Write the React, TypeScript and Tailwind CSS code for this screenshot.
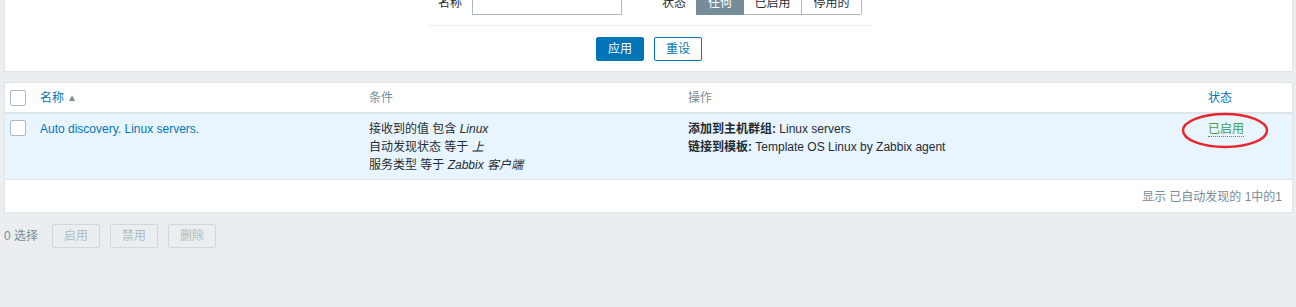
const font = { fontFamily: '"Liberation Sans", Arial, "Noto Sans CJK SC", sans-serif' };

function Checkbox() {
  return <span className="block h-[16px] w-[16px] rounded-[2px] border border-[#acbbc2] bg-white" />;
}

function FilterPanel() {
  return (
    <div className="-mt-[10px] ml-[4px] mr-[3px] border border-[#dfe4e7] bg-white pb-[10px]">
      <div className="ml-[423px] w-[444px]">
        <div className="flex h-[24px] items-center">
          <span className="w-[34px] text-right text-[#1f2c33]">名称</span>
          <span className="ml-[10px] h-[24px] w-[150px] border border-[#acbbc2] bg-white" />
          <span className="ml-[40px] w-[24px] text-[#1f2c33]">状态</span>
          <div className="ml-[10px] flex h-[24px]">
            <span className="flex w-[48px] items-center justify-center border border-[#768d99] bg-[#768d99] text-white">任何</span>
            <span className="flex w-[58px] items-center justify-center border border-l-0 border-[#acbbc2] text-[#1f2c33]">已启用</span>
            <span className="flex w-[60px] items-center justify-center rounded-r-[2px] border border-l-0 border-[#acbbc2] text-[#1f2c33]">停用的</span>
          </div>
        </div>
        <div className="mt-[10px] h-px bg-[#ebeef0]" />
        <div className="mt-[11px] flex justify-center gap-[10px] pr-[2px]">
          <button className="h-[24px] w-[48px] rounded-[2px] border border-[#0275b8] bg-[#0275b8] text-white">应用</button>
          <button className="h-[24px] w-[48px] rounded-[2px] border border-[#0275b8] bg-white text-[#0275b8]">重设</button>
        </div>
      </div>
    </div>
  );
}

const cols = 'grid grid-cols-[30px_329px_319px_520px_1fr]';

function DiscoveryTable() {
  return (
    <div className="mt-[10px] ml-[4px] mr-[3px] border border-[#dfe4e7] bg-white">
      <div className={`${cols} h-[31px] items-center border-b-2 border-[#dfe4e7]`}>
        <div className="pl-[5px]"><Checkbox /></div>
        <div className="px-[5px] text-[#0275b8]">
          名称<span className="ml-[3px] inline-block align-[1px] text-[10px] text-[#768d99]">▲</span>
        </div>
        <div className="px-[5px] text-[#768d99]">条件</div>
        <div className="px-[5px] text-[#768d99]">操作</div>
        <div className="px-[5px] text-[#0275b8]">状态</div>
      </div>
      <div className={`${cols} border-b border-[#dfe4e7] bg-[#e8f5ff] pt-[6px] pb-[5px] leading-[18px] text-[#1f2c33]`}>
        <div className="pl-[5px]"><Checkbox /></div>
        <div className="px-[5px] text-[#0275b8]">Auto discovery. Linux servers.</div>
        <div className="px-[5px]">
          <div>接收到的值 包含 <i>Linux</i></div>
          <div>自动发现状态 等于 <i>上</i></div>
          <div>服务类型 等于 <i>Zabbix 客户端</i></div>
        </div>
        <div className="px-[5px]">
          <div><b>添加到主机群组:</b> Linux servers</div>
          <div><b>链接到模板:</b> Template OS Linux by Zabbix agent</div>
        </div>
        <div className="relative px-[5px]">
          <span className="border-b border-dotted border-[#429e47] text-[#429e47]">已启用</span>
          <svg className="pointer-events-none absolute left-[-22px] top-[-8px]" width="88" height="37" viewBox="0 0 88 37">
            <ellipse cx="44" cy="18.5" rx="42" ry="16.5" fill="none" stroke="#e8262d" strokeWidth="2.5" />
          </svg>
        </div>
      </div>
      <div className="flex h-[32px] items-center justify-end pr-[10px] pt-[1px] text-[#768d99]">显示 已自动发现的 1中的1</div>
    </div>
  );
}

function ActionBar() {
  return (
    <div className="ml-[4px] mt-[11px] flex items-center">
      <span className="mr-[14px] text-[#768d99]">0 选择</span>
      <div className="flex gap-[10px]">
        {['启用', '禁用', '删除'].map((label) => (
          <button key={label} className="h-[24px] w-[48px] rounded-[2px] border border-[#cfd8dc] bg-[#ebeef0] text-[#acbbc2]">{label}</button>
        ))}
      </div>
    </div>
  );
}

export default function App() {
  return (
    <div className="h-[307px] w-[1296px] overflow-hidden bg-[#ebeef0] text-[12px] leading-[14px]" style={font}>
      <FilterPanel />
      <DiscoveryTable />
      <ActionBar />
    </div>
  );
}
